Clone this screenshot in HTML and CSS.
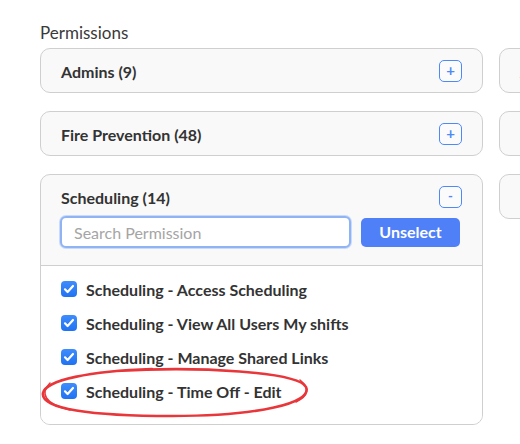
FILE: index.html
```html
<!DOCTYPE html>
<html lang="en">
<head>
<meta charset="utf-8">
<title>Permissions</title>
<link rel="stylesheet" href="styles.css">
</head>
<body>
<main class="page">
  <div class="label">Permissions</div>
  <div class="grid">
    <section class="card">
      <div class="card-head">
        <div class="head-row">
          <span class="title">Admins (9)</span>
          <button class="toggle" type="button">+</button>
        </div>
      </div>
    </section>
    <section class="card">
      <div class="card-head">
        <div class="head-row">
          <span class="title">Apparatus (6)</span>
          <button class="toggle" type="button">+</button>
        </div>
      </div>
    </section>
    <section class="card">
      <div class="card-head">
        <div class="head-row">
          <span class="title">Fire Prevention (48)</span>
          <button class="toggle" type="button">+</button>
        </div>
      </div>
    </section>
    <section class="card">
      <div class="card-head">
        <div class="head-row">
          <span class="title"></span>
          <button class="toggle" type="button">+</button>
        </div>
      </div>
    </section>
    <section class="card open">
      <div class="card-head">
        <div class="head-row">
          <span class="title">Scheduling (14)</span>
          <button class="toggle minus" type="button">-</button>
        </div>
        <div class="search-row">
          <input class="search" type="text" placeholder="Search Permission">
          <button class="unselect" type="button">Unselect</button>
        </div>
      </div>
      <ul class="list">
        <li class="item"><span class="check"><svg viewBox="0 0 16 16" width="16" height="16"><path d="M4 8.3l2.6 2.7L12 5" fill="none" stroke="#fff" stroke-width="2.2" stroke-linecap="round" stroke-linejoin="round"/></svg></span>Scheduling - Access Scheduling</li>
        <li class="item"><span class="check"><svg viewBox="0 0 16 16" width="16" height="16"><path d="M4 8.3l2.6 2.7L12 5" fill="none" stroke="#fff" stroke-width="2.2" stroke-linecap="round" stroke-linejoin="round"/></svg></span>Scheduling - View All Users My shifts</li>
        <li class="item"><span class="check"><svg viewBox="0 0 16 16" width="16" height="16"><path d="M4 8.3l2.6 2.7L12 5" fill="none" stroke="#fff" stroke-width="2.2" stroke-linecap="round" stroke-linejoin="round"/></svg></span>Scheduling - Manage Shared Links</li>
        <li class="item"><span class="check"><svg viewBox="0 0 16 16" width="16" height="16"><path d="M4 8.3l2.6 2.7L12 5" fill="none" stroke="#fff" stroke-width="2.2" stroke-linecap="round" stroke-linejoin="round"/></svg></span>Scheduling - Time Off - Edit</li>
      </ul>
    </section>
    <section class="card">
      <div class="card-head">
        <div class="head-row">
          <span class="title"></span>
          <button class="toggle" type="button">+</button>
        </div>
      </div>
    </section>
  </div>
  <svg class="annotation" width="520" height="444" viewBox="0 0 520 444">
    <path d="M116 371 C200 366 298 372 306 387 C313 403 258 416 172 416 C92 416 40 409 43 393 C46 380 90 371 152 369" fill="none" stroke="#e8363a" stroke-width="2.6" stroke-linecap="round"/>
    <path d="M300 380 C310 388 309 396 296 402" fill="none" stroke="#e8363a" stroke-width="1.5" stroke-linecap="round"/>
    <path d="M50 383 C40 393 44 404 70 410" fill="none" stroke="#e8363a" stroke-width="1.5" stroke-linecap="round"/>
  </svg>
</main>
</body>
</html>
```

FILE: styles.css
```css
html, body {
  margin: 0;
  padding: 0;
  overflow: hidden;
  background: #fff;
}

body {
  font-family: Lato, "Open Sans", sans-serif;
  color: #333;
}

.page {
  position: relative;
  width: 520px;
  height: 444px;
  padding: 23px 0 0 40px;
  box-sizing: border-box;
}

.label {
  font-size: 17px;
  line-height: 20px;
  color: #3a3a3a;
  margin-bottom: 5px;
}

.grid {
  display: grid;
  grid-template-columns: 443px 443px;
  column-gap: 16px;
  row-gap: 18px;
  align-items: start;
}

.card {
  border: 1px solid #cfcfcf;
  border-radius: 10px;
  background: #f9f9f9;
  overflow: hidden;
}

.card-head {
  padding: 11px 20px 10px 20px;
}

.open .card-head {
  padding-bottom: 17px;
  border-bottom: 1px solid #cfcfcf;
}

.head-row {
  display: flex;
  align-items: center;
  justify-content: space-between;
  height: 22px;
}

.title {
  font-size: 16px;
  font-weight: 700;
  color: #333;
  white-space: nowrap;
}

.toggle {
  width: 23px;
  height: 22px;
  box-sizing: border-box;
  border: 1.5px solid #4d8af7;
  border-radius: 5px;
  background: #fbfbfb;
  color: #4d8af7;
  font-family: Lato, sans-serif;
  font-weight: 700;
  font-size: 15px;
  line-height: 1;
  padding: 0 0 1px 0;
  display: flex;
  align-items: center;
  justify-content: center;
}

.toggle.minus {
  font-size: 13px;
}

.search-row {
  display: flex;
  align-items: center;
  gap: 10px;
  margin-top: 8px;
  margin-left: -1px;
}

.search {
  width: 291px;
  height: 32px;
  box-sizing: border-box;
  border: 2px solid #8fb3f3;
  border-radius: 6px;
  background: #fff;
  padding: 0 12px;
  font-family: Lato, sans-serif;
  font-size: 16px;
  color: #333;
  outline: none;
  box-shadow: 0 0 0 1px #c9dafa;
}

.search::placeholder {
  color: #a5a5a5;
}

.unselect {
  width: 99px;
  height: 29px;
  border: none;
  border-radius: 5px;
  background: #4f80f7;
  color: #fff;
  font-family: Lato, sans-serif;
  font-weight: 700;
  font-size: 16px;
  padding: 0 0 1px 0;
}

.list {
  list-style: none;
  margin: 0;
  padding: 6px 20px 16px 20px;
  background: #fff;
}

.item {
  display: flex;
  align-items: center;
  gap: 9px;
  height: 34px;
  font-size: 16px;
  font-weight: 700;
  color: #333;
  white-space: nowrap;
}

.check {
  width: 16px;
  height: 16px;
  border-radius: 4px;
  background: linear-gradient(#3f8cfb, #1f72f2);
  display: flex;
  flex: none;
}

.annotation {
  position: absolute;
  left: 0;
  top: 0;
  pointer-events: none;
}
```
